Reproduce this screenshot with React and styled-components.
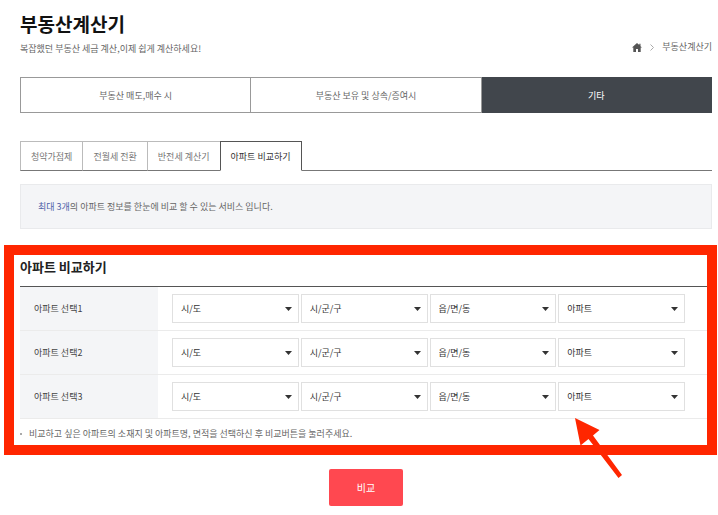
import React, { useState } from "react";
import styled, { createGlobalStyle } from "styled-components";

const mainTabs = ["부동산 매도,매수 시", "부동산 보유 및 상속/증여시", "기타"];
const subTabs = ["청약가점제", "전월세 전환", "반전세 계산기", "아파트 비교하기"];
const regions = ["시/도", "시/군/구", "읍/면/동", "아파트"];
const rows = [1, 2, 3];

const App = () => {
  const [mainTab, setMainTab] = useState(2);
  const [subTab, setSubTab] = useState(3);

  return (
    <>
      <GlobalStyle />
      <Content>
        <Header>
          <div>
            <Title>부동산계산기</Title>
            <SubTitle>복잡했던 부동산 세금 계산,이제 쉽게 계산하세요!</SubTitle>
          </div>
          <Breadcrumb>
            <a href="#home" aria-label="홈">
              <HomeIcon />
            </a>
            <svg width="4" height="7" viewBox="0 0 4 7">
              <path d="M.5.5l3 3-3 3" fill="none" stroke="#aaa" />
            </svg>
            <a href="#calculator">부동산계산기</a>
          </Breadcrumb>
        </Header>

        <MainTabs>
          {mainTabs.map((name, i) => (
            <MainTab
              key={name}
              type="button"
              $active={i === mainTab}
              onClick={() => setMainTab(i)}
            >
              {name}
            </MainTab>
          ))}
        </MainTabs>

        <SubTabs>
          {subTabs.map((name, i) => (
            <SubTab
              key={name}
              type="button"
              $active={i === subTab}
              onClick={() => setSubTab(i)}
            >
              {name}
            </SubTab>
          ))}
        </SubTabs>

        <Notice>
          <em>최대 3개</em>의 아파트 정보를 한눈에 비교 할 수 있는 서비스 입니다.
        </Notice>
      </Content>

      <Frame>
        <SectionTitle>아파트 비교하기</SectionTitle>
        <Rows>
          {rows.map((n) => (
            <Row key={n} role="group" aria-labelledby={`apt-${n}`}>
              <RowLabel id={`apt-${n}`}>아파트 선택{n}</RowLabel>
              <Fields>
                {regions.map((region) => (
                  <SelectBox key={region}>
                    <select aria-label={region}>
                      <option>{region}</option>
                    </select>
                    <svg width="7" height="4" viewBox="0 0 7 4">
                      <path d="M0 0h7L3.5 4z" fill="#333" />
                    </svg>
                  </SelectBox>
                ))}
              </Fields>
            </Row>
          ))}
        </Rows>
        <Note>
          비교하고 싶은 아파트의 소재지 및 아파트명, 면적을 선택하신 후 비교버튼을
          눌러주세요.
        </Note>
        <Arrow width="48" height="62" viewBox="0 0 48 62">
          <path
            d="M0 0L24.500 12L18 17.500L47 57L43.500 60L13.500 21L5.500 27.500z"
            fill="#ff2600"
          />
        </Arrow>
      </Frame>

      <Content>
        <Submit type="button">비교</Submit>
      </Content>
    </>
  );
};

const HomeIcon = () => (
  <svg width="10" height="9" viewBox="0 0 10 9">
    <path
      d="M5 0L0 4.600h1.300V9H4V6h2v3h2.700V4.600H10L8.500 3.200V.8H7.300v1.300z"
      fill="#555"
    />
  </svg>
);

const GlobalStyle = createGlobalStyle`
  * {
    box-sizing: border-box;
  }
  body {
    margin: 0;
    background: #fff;
    color: #666;
    font-family: "Noto Sans CJK KR", "Noto Sans", sans-serif;
    font-size: 9px;
    line-height: 16px;
  }
  button, select {
    font: inherit;
    color: inherit;
    cursor: pointer;
  }
  h1, h2, p {
    margin: 0;
  }
  a {
    color: inherit;
    text-decoration: none;
  }
`;

const Content = styled.div`
  padding: 0 6px 0 20px;
`;

const Header = styled.header`
  display: flex;
  justify-content: space-between;
  align-items: flex-end;
  padding-top: 10px;
`;

const Title = styled.h1`
  font-size: 19px;
  line-height: 28px;
  font-weight: 700;
  color: #111;
`;

const SubTitle = styled.p`
  margin-top: 3px;
`;

const Breadcrumb = styled.nav`
  display: flex;
  align-items: center;
  gap: 8px;
  padding-bottom: 2px;
  a {
    display: flex;
  }
`;

const MainTabs = styled.nav`
  display: grid;
  grid-template-columns: repeat(3, 1fr);
  margin-top: 20px;
  border-left: 1px solid #999;
`;

const MainTab = styled.button`
  height: 36px;
  padding: 1px 0 0;
  border: 1px solid ${({ $active }) => ($active ? "#41464c" : "#999")};
  border-left: 0;
  background: ${({ $active }) => ($active ? "#41464c" : "#fff")};
  color: ${({ $active }) => ($active ? "#fff" : "#666")};
`;

const SubTabs = styled.nav`
  display: flex;
  margin-top: 28px;
  &::after {
    content: "";
    flex: 1;
    border-bottom: 1px solid #777;
  }
`;

const SubTab = styled.button`
  height: 30px;
  padding: 1px 10px 0;
  border: 1px solid ${({ $active }) => ($active ? "#555" : "#bbb")};
  border-bottom-color: ${({ $active }) => ($active ? "#fff" : "#777")};
  border-right-width: ${({ $active }) => ($active ? "1px" : "0")};
  background: #fff;
  color: ${({ $active }) => ($active ? "#333" : "#777")};
`;

const Notice = styled.p`
  margin-top: 13px;
  padding: 14px 17px 13px;
  border: 1px solid #e9eaec;
  background: #f4f5f7;
  em {
    font-style: normal;
    color: #4f62a8;
  }
`;

const Frame = styled.section`
  position: relative;
  margin: 16px 1px 14px 4px;
  padding: 0 0 3px 6px;
  border: 10px solid #ff2600;
`;

const SectionTitle = styled.h2`
  padding-bottom: 7px;
  font-size: 13px;
  line-height: 24px;
  font-weight: 700;
  color: #222;
`;

const Rows = styled.div`
  border-top: 1px solid #555;
`;

const Row = styled.div`
  display: flex;
  height: 44px;
  border-bottom: 1px solid #ebebeb;
`;

const RowLabel = styled.div`
  display: flex;
  align-items: center;
  width: 138px;
  padding-left: 14px;
  background: #f4f5f7;
  color: #444;
`;

const Fields = styled.div`
  display: flex;
  flex: 1;
  align-items: center;
  gap: 2px;
  padding: 0 22px 0 14px;
`;

const SelectBox = styled.div`
  position: relative;
  flex: 1;
  select {
    display: block;
    width: 100%;
    height: 29px;
    padding: 1px 20px 0 8px;
    border: 1px solid #e0e0e0;
    border-radius: 0;
    background: #fff;
    color: #333;
    appearance: none;
  }
  svg {
    position: absolute;
    top: 13px;
    right: 7px;
    pointer-events: none;
  }
`;

const Note = styled.p`
  display: flex;
  align-items: center;
  gap: 7px;
  margin-top: 7px;
  &::before {
    content: "";
    width: 2px;
    height: 2px;
    background: #aaa;
  }
`;

const Arrow = styled.svg`
  position: absolute;
  top: 163px;
  right: 84px;
`;

const Submit = styled.button`
  display: block;
  width: 74px;
  height: 37px;
  margin: 0 auto;
  padding: 0;
  border: 0;
  border-radius: 2px;
  background: #ff4850;
  color: #fff;
  font-size: 10px;
`;

export default App;
